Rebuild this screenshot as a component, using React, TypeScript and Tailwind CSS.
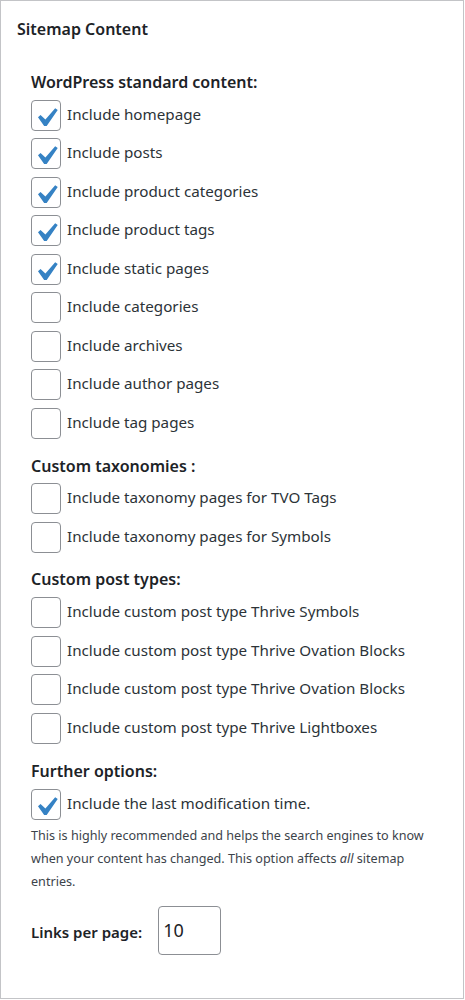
import React from "react";

const font = { fontFamily: '"Noto Sans", "Open Sans", sans-serif' };

function Check({ checked }: { checked: boolean }) {
  return (
    <span className="relative block w-[30px] h-[31px] shrink-0 rounded-[4px] border border-[#8c8f94] bg-white">
      {checked && (
        <svg
          viewBox="0 0 20 20"
          className="absolute left-[-5px] top-[-2px] w-[38px] h-[38px]"
        >
          <path
            d="M14.83 4.89l1.34.94-5.81 8.38H9.02L5.78 9.67l1.34-1.25 2.57 2.4z"
            fill="#3582c4"
          />
        </svg>
      )}
    </span>
  );
}

function Row({ label, checked = false }: { label: string; checked?: boolean }) {
  return (
    <div className="flex items-center h-[38.5px]">
      <Check checked={checked} />
      <span className="ml-[6px] mb-[2px] text-[15.2px] text-[#2c3338] leading-none">{label}</span>
    </div>
  );
}

function Header({ children, mt }: { children: React.ReactNode; mt: string }) {
  return (
    <div className={`${mt} h-[24px] leading-[24px] text-[16px] font-semibold text-[#1d2327]`}>{children}</div>
  );
}

export default function App() {
  return (
    <div style={font} className="w-[464px] h-[999px] border border-[#c3c4c7] bg-white">
      <div className="pt-[16px] pl-[16px]">
        <div className="h-[24px] leading-[24px] text-[16px] font-semibold text-[#1d2327]">Sitemap Content</div>
      </div>
      <div className="pl-[30px] pr-4">
        <Header mt="mt-[29px]">WordPress standard content:</Header>
        <div className="mt-[2px]">
          <Row label="Include homepage" checked />
          <Row label="Include posts" checked />
          <Row label="Include product categories" checked />
          <Row label="Include product tags" checked />
          <Row label="Include static pages" checked />
          <Row label="Include categories" />
          <Row label="Include archives" />
          <Row label="Include author pages" />
          <Row label="Include tag pages" />
        </div>
        <Header mt="mt-[11.5px]">Custom taxonomies :</Header>
        <div className="mt-[1.5px]">
          <Row label="Include taxonomy pages for TVO Tags" />
          <Row label="Include taxonomy pages for Symbols" />
        </div>
        <Header mt="mt-[10.5px]">Custom post types:</Header>
        <div className="mt-[2.5px]">
          <Row label="Include custom post type Thrive Symbols" />
          <Row label="Include custom post type Thrive Ovation Blocks" />
          <Row label="Include custom post type Thrive Ovation Blocks" />
          <Row label="Include custom post type Thrive Lightboxes" />
        </div>
        <Header mt="mt-[11.5px]">Further options:</Header>
        <div className="mt-[2px]">
          <Row label="Include the last modification time." checked />
        </div>
        <p className="text-[12.6px] leading-[23px] text-[#3c434a] pr-2">
          This is highly recommended and helps the search engines to know when your content has changed. This option affects <em>all</em> sitemap entries.
        </p>
        <div className="mt-[13px] flex items-center">
          <span className="text-[15px] font-semibold text-[#1d2327] mt-[5px]">Links per page:</span>
          <div className="ml-[16px] w-[63px] h-[49px] rounded-[4px] border border-[#8c8f94] flex items-center pl-[4px] text-[18px] text-[#1d2327]">
            10
          </div>
        </div>
      </div>
    </div>
  );
}
